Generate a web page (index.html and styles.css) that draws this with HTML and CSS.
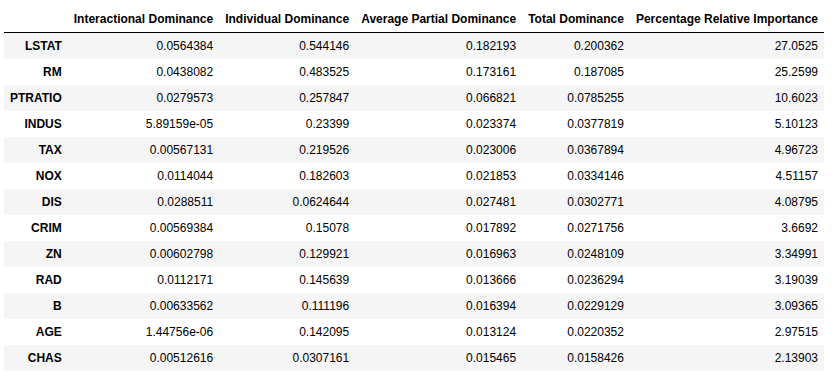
FILE: index.html
```html
<!DOCTYPE html>
<html lang="en">
<head>
  <meta charset="UTF-8">
  <title>Dominance Analysis</title>
  <link rel="stylesheet" href="styles.css">
</head>
<body>
  <div class="output">
    <table class="dataframe">
      <thead>
        <tr>
          <th></th>
          <th>Interactional Dominance</th>
          <th>Individual Dominance</th>
          <th>Average Partial Dominance</th>
          <th>Total Dominance</th>
          <th>Percentage Relative Importance</th>
        </tr>
      </thead>
      <tbody>
        <tr><th>LSTAT</th><td>0.0564384</td><td>0.544146</td><td>0.182193</td><td>0.200362</td><td>27.0525</td></tr>
        <tr><th>RM</th><td>0.0438082</td><td>0.483525</td><td>0.173161</td><td>0.187085</td><td>25.2599</td></tr>
        <tr><th>PTRATIO</th><td>0.0279573</td><td>0.257847</td><td>0.066821</td><td>0.0785255</td><td>10.6023</td></tr>
        <tr><th>INDUS</th><td>5.89159e-05</td><td>0.23399</td><td>0.023374</td><td>0.0377819</td><td>5.10123</td></tr>
        <tr><th>TAX</th><td>0.00567131</td><td>0.219526</td><td>0.023006</td><td>0.0367894</td><td>4.96723</td></tr>
        <tr><th>NOX</th><td>0.0114044</td><td>0.182603</td><td>0.021853</td><td>0.0334146</td><td>4.51157</td></tr>
        <tr><th>DIS</th><td>0.0288511</td><td>0.0624644</td><td>0.027481</td><td>0.0302771</td><td>4.08795</td></tr>
        <tr><th>CRIM</th><td>0.00569384</td><td>0.15078</td><td>0.017892</td><td>0.0271756</td><td>3.6692</td></tr>
        <tr><th>ZN</th><td>0.00602798</td><td>0.129921</td><td>0.016963</td><td>0.0248109</td><td>3.34991</td></tr>
        <tr><th>RAD</th><td>0.0112171</td><td>0.145639</td><td>0.013666</td><td>0.0236294</td><td>3.19039</td></tr>
        <tr><th>B</th><td>0.00633562</td><td>0.111196</td><td>0.016394</td><td>0.0229129</td><td>3.09365</td></tr>
        <tr><th>AGE</th><td>1.44756e-06</td><td>0.142095</td><td>0.013124</td><td>0.0220352</td><td>2.97515</td></tr>
        <tr><th>CHAS</th><td>0.00512616</td><td>0.0307161</td><td>0.015465</td><td>0.0158426</td><td>2.13903</td></tr>
      </tbody>
    </table>
  </div>
</body>
</html>
```

FILE: styles.css
```css
html {
  background: #fff;
}

body {
  margin: 0;
  font-family: 'Liberation Sans', Arial, sans-serif;
  color: #000;
}

.output {
  padding: 6px 4px;
}

.dataframe {
  border: none;
  border-collapse: collapse;
  border-spacing: 0;
  font-size: 12px;
  color: #000;
}

.dataframe thead {
  border-bottom: 1px solid #000;
  vertical-align: bottom;
}

.dataframe th,
.dataframe td {
  text-align: right;
  vertical-align: middle;
  padding: 6px;
  line-height: normal;
  white-space: nowrap;
  border: none;
}

.dataframe th {
  font-weight: bold;
}

.dataframe tbody tr:nth-child(odd) {
  background: #f5f5f5;
}
```
